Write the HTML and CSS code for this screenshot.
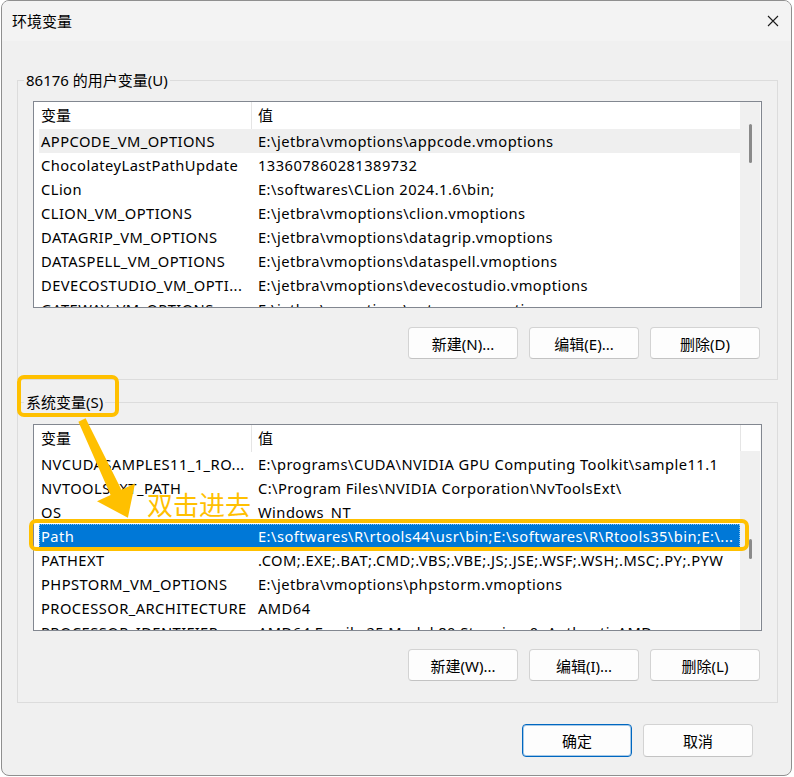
FILE: index.html
```html
<!DOCTYPE html>
<html lang="zh-CN">
<head>
<meta charset="utf-8">
<title>环境变量</title>
<link rel="stylesheet" href="styles.css">
</head>
<body>
<div class="window">
  <div class="titlebar">
    <span class="title">环境变量</span>
    <button class="close" aria-label="关闭">
      <svg width="12" height="12" viewBox="0 0 12 12"><path d="M1 1L11 11M11 1L1 11" stroke="#1b1b1b" stroke-width="1.1" fill="none"/></svg>
    </button>
  </div>

  <div class="content">
    <fieldset class="group group-user">
      <legend>86176 的用户变量(U)</legend>
      <div class="list">
        <div class="table">
          <div class="thead"><div class="cell c-name">变量</div><div class="cell c-value">值</div></div>
          <div class="row hover"><div class="cell c-name">APPCODE_VM_OPTIONS</div><div class="cell c-value">E:\jetbra\vmoptions\appcode.vmoptions</div></div>
          <div class="row"><div class="cell c-name">ChocolateyLastPathUpdate</div><div class="cell c-value">133607860281389732</div></div>
          <div class="row"><div class="cell c-name">CLion</div><div class="cell c-value">E:\softwares\CLion 2024.1.6\bin;</div></div>
          <div class="row"><div class="cell c-name">CLION_VM_OPTIONS</div><div class="cell c-value">E:\jetbra\vmoptions\clion.vmoptions</div></div>
          <div class="row"><div class="cell c-name">DATAGRIP_VM_OPTIONS</div><div class="cell c-value">E:\jetbra\vmoptions\datagrip.vmoptions</div></div>
          <div class="row"><div class="cell c-name">DATASPELL_VM_OPTIONS</div><div class="cell c-value">E:\jetbra\vmoptions\dataspell.vmoptions</div></div>
          <div class="row"><div class="cell c-name">DEVECOSTUDIO_VM_OPTI...</div><div class="cell c-value">E:\jetbra\vmoptions\devecostudio.vmoptions</div></div>
          <div class="row"><div class="cell c-name">GATEWAY_VM_OPTIONS</div><div class="cell c-value">E:\jetbra\vmoptions\gateway.vmoptions</div></div>
        </div>
        <div class="scrollbar"><div class="thumb" style="margin-top:22px;height:39px"></div></div>
      </div>
      <div class="buttons">
        <button class="btn">新建(N)...</button>
        <button class="btn">编辑(E)...</button>
        <button class="btn">删除(D)</button>
      </div>
    </fieldset>

    <fieldset class="group group-system">
      <legend>系统变量(S)</legend>
      <div class="list">
        <div class="table">
          <div class="thead"><div class="cell c-name">变量</div><div class="cell c-value">值</div></div>
          <div class="row"><div class="cell c-name">NVCUDASAMPLES11_1_RO...</div><div class="cell c-value">E:\programs\CUDA\NVIDIA GPU Computing Toolkit\sample11.1</div></div>
          <div class="row"><div class="cell c-name">NVTOOLSEXT_PATH</div><div class="cell c-value">C:\Program Files\NVIDIA Corporation\NvToolsExt\</div></div>
          <div class="row"><div class="cell c-name">OS</div><div class="cell c-value">Windows_NT</div></div>
          <div class="row selected"><div class="cell c-name">Path</div><div class="cell c-value">E:\softwares\R\rtools44\usr\bin;E:\softwares\R\Rtools35\bin;E:\...</div></div>
          <div class="row"><div class="cell c-name">PATHEXT</div><div class="cell c-value">.COM;.EXE;.BAT;.CMD;.VBS;.VBE;.JS;.JSE;.WSF;.WSH;.MSC;.PY;.PYW</div></div>
          <div class="row"><div class="cell c-name">PHPSTORM_VM_OPTIONS</div><div class="cell c-value">E:\jetbra\vmoptions\phpstorm.vmoptions</div></div>
          <div class="row"><div class="cell c-name">PROCESSOR_ARCHITECTURE</div><div class="cell c-value">AMD64</div></div>
          <div class="row"><div class="cell c-name">PROCESSOR_IDENTIFIER</div><div class="cell c-value">AMD64 Family 25 Model 80 Stepping 0, AuthenticAMD</div></div>
        </div>
        <div class="scrollbar scrollbar-split"><div class="sb-head"></div><div class="thumb" style="margin-top:88px;height:20px"></div></div>
      </div>
      <div class="buttons">
        <button class="btn">新建(W)...</button>
        <button class="btn">编辑(I)...</button>
        <button class="btn">删除(L)</button>
      </div>
    </fieldset>
  </div>

  <div class="footer">
    <button class="btn btn-primary">确定</button>
    <button class="btn">取消</button>
  </div>
</div>

<div class="hl hl-group"></div>
<div class="hl hl-row"></div>
<svg class="arrow" width="794" height="777" viewBox="0 0 794 777">
  <polygon points="78.4,421.7 85.6,418.3 121.4,489.8 135,483.5 127.9,517.7 97,501.3 110.6,494.9" fill="#ffc000"/>
</svg>
<div class="note">双击进去</div>
</body>
</html>
```

FILE: styles.css
```css
* {
  box-sizing: border-box;
}

html,
body {
  margin: 0;
  padding: 0;
}

body {
  position: relative;
  width: 794px;
  height: 777px;
  overflow: hidden;
  background: #ffffff;
  color: #000000;
  font-family: "Noto Sans", "Noto Sans CJK SC", sans-serif;
  font-size: 15px;
}

.window {
  margin-left: 1px;
  width: 791px;
  height: 776px;
  border: 1px solid #8f8f8f;
  border-radius: 8px;
  background: #f0f0f0;
  display: flex;
  flex-direction: column;
  overflow: hidden;
}

.titlebar {
  flex: none;
  height: 40px;
  display: flex;
  align-items: center;
  justify-content: space-between;
  padding-left: 10px;
  background: #f3f3f3;
}

.title {
  font-size: 15px;
  line-height: 20px;
}

.close {
  width: 36px;
  height: 40px;
  padding: 0;
  border: 0;
  background: transparent;
  display: flex;
  align-items: center;
  justify-content: center;
}

.content {
  flex: none;
  padding: 29px 13px 0 15px;
}

.group {
  margin: 0;
  min-width: 0;
  border: 1px solid #dcdcdc;
  padding: 11px 15px 20px;
}

.group-system {
  margin-top: 12px;
  padding: 12px 15px 21px;
}

.group legend {
  margin-left: -9px;
  padding: 0 2px;
  font-size: 15px;
  line-height: 20px;
}

.list {
  height: 207px;
  border: 1px solid #828790;
  background: #ffffff;
  display: flex;
}

.table {
  flex: 1;
  min-width: 0;
  overflow: hidden;
}

.thead {
  height: 27px;
  display: flex;
  margin-left: 5px;
}

.thead .cell {
  line-height: 27px;
}

.thead .c-name {
  border-right: 1px solid #e5e5e5;
}

.row {
  height: 24px;
  display: flex;
  margin-left: 5px;
}

.cell {
  white-space: nowrap;
  overflow: hidden;
  line-height: 24px;
}

.row .cell {
  font-size: 14.7px;
  letter-spacing: 0.45px;
}

.c-name {
  flex: none;
  width: 213px;
  padding-left: 2px;
}

.c-value {
  flex: 1;
  min-width: 0;
  padding-left: 6px;
}

.row.hover {
  background: #efefef;
}

.row.selected {
  background: #0078d7;
  color: #ffffff;
  outline: 1px dotted rgba(255, 255, 255, 0.55);
  outline-offset: -1px;
}

.scrollbar {
  flex: none;
  width: 21px;
  background: #f0f0f0;
  border-right: 1px solid #fafafa;
  display: flex;
  flex-direction: column;
  align-items: center;
}

.scrollbar-split .sb-head {
  align-self: stretch;
  height: 26px;
  background: #ffffff;
  border-left: 1px solid #e5e5e5;
}

.thumb {
  flex: none;
  width: 3px;
  background: #8a8a8a;
  border-radius: 1.5px;
}

.buttons {
  display: flex;
  justify-content: flex-end;
  gap: 11px;
  margin-top: 19px;
  padding-right: 2px;
}

.group-system .buttons {
  margin-top: 18px;
}

.btn {
  width: 110px;
  height: 32px;
  padding: 0;
  border: 1px solid #d3d3d3;
  border-bottom-color: #c3c3c3;
  border-radius: 4px;
  background: #fdfdfd;
  color: #000000;
  font-family: "Noto Sans", "Noto Sans CJK SC", sans-serif;
  font-size: 15px;
}

.footer {
  flex: none;
  display: flex;
  justify-content: flex-end;
  gap: 11px;
  padding: 21px 38px 0 0;
}

.footer .btn {
  height: 33px;
}

.btn-primary {
  border: 1px solid #0067c0;
  box-shadow: inset 0 0 0 1px rgba(0, 103, 192, 0.35);
}

/* annotations drawn over the screenshot */
.hl {
  position: absolute;
  border: 4px solid #ffc000;
  border-radius: 7px;
}

.hl-group {
  left: 17px;
  top: 375px;
  width: 102px;
  height: 42px;
}

.hl-row {
  left: 29px;
  top: 519px;
  width: 720px;
  height: 32px;
}

.arrow {
  position: absolute;
  left: 0;
  top: 0;
  pointer-events: none;
}

.note {
  position: absolute;
  left: 147px;
  top: 489px;
  color: #ffc000;
  font-family: "Noto Sans CJK SC", sans-serif;
  font-size: 26px;
  line-height: 30px;
}
```
